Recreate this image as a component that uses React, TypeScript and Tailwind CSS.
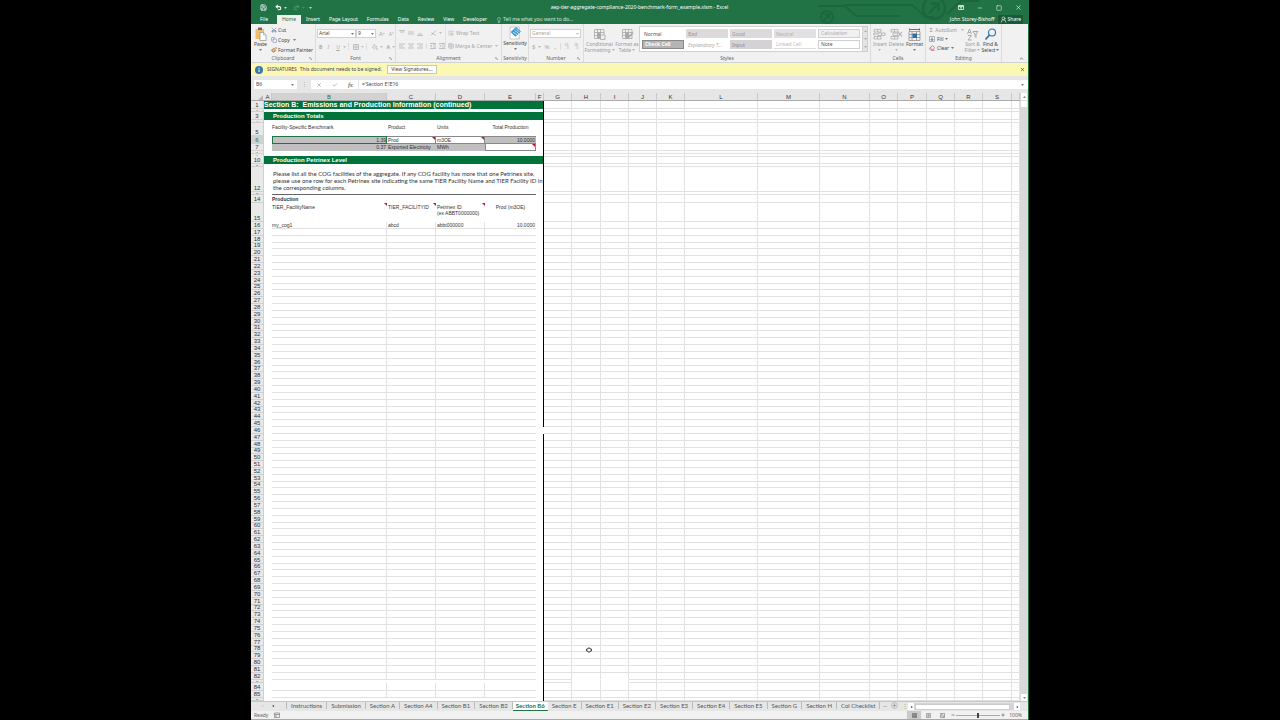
import React from "react";
import {
  Save, Undo2, Redo2, Lightbulb, Scissors, Copy, UserRound, Minus, Square, X, Check,
  ChevronUp, PaintBucket, Eraser, Plus, WrapText, TableCellsMerge, Paintbrush,
} from "lucide-react";

const COLS = ["A", "B", "C", "D", "E", "F", "G", "H", "I", "J", "K", "L", "M", "N", "O", "P", "Q", "R", "S", ""];
const RIGHT_COLS = COLS.slice(6);
const GRID =
  "grid grid-cols-[13px_8fr_115fr_49fr_49fr_51fr_8fr_28fr_29fr_28fr_28fr_28fr_73fr_62fr_50fr_28fr_29fr_28fr_28fr_29fr_8fr]";

const Caret = ({ className = "" }: { className?: string }) => (
  <svg viewBox="0 0 6 4" className={"h-[2px] w-[3px] shrink-0 fill-current opacity-70 " + className}>
    <path d="M0 0h6L3 4z" />
  </svg>
);

/* ---------- title bar ---------- */

function Circuit() {
  return (
    <svg viewBox="0 0 180 24" className="pointer-events-none absolute top-0 right-[48px] h-6 w-[180px]" fill="none" stroke="#1d653d" strokeWidth="1.8">
      <path d="M19 6h26l11 10h45M45 5h67l14 12h8M147 14l14-13h22M151 19h20" />
      <circle cx="134" cy="8" r="11" strokeWidth="2.4" />
      <path d="M129 13l9-9M131 3.5h7.500v7.500" strokeWidth="2.4" />
      <circle cx="27" cy="17" r="6" />
      <path d="M24 20l5-5M25 14.500h4.500v4.500" />
    </svg>
  );
}

function TitleBar() {
  return (
    <div className="relative flex h-[15px] items-center text-white">
      <div className="flex w-[110px] items-center gap-1 pl-[9px]">
        <button aria-label="Save"><Save className="size-[7px]" strokeWidth={2.5} /></button>
        <button aria-label="Undo" className="ml-1 flex items-center gap-[2px]"><Undo2 className="size-[7px]" strokeWidth={3.5} /><Caret /></button>
        <button aria-label="Redo" className="ml-[2px] flex items-center gap-[2px] text-[#5d9a79]"><Redo2 className="size-[7px]" strokeWidth={3} /><Caret /></button>
        <button aria-label="Customize"><Caret /></button>
      </div>
      <h1 className="flex-1 text-center text-[5px]">aep-tier-aggregate-compliance-2020-benchmark-form_example.xlsm - Excel</h1>
      <div className="flex w-[110px] items-center justify-end gap-[13px] pr-[6px]">
        <button aria-label="Ribbon display options">
          <svg viewBox="0 0 12 10" className="h-[5px] w-[6px]" fill="none" stroke="currentColor" strokeWidth="1.5"><path d="M1 1h10v8H1zM1 3h10M6 8V5M4.500 6L6 4.500 7.500 6" /></svg>
        </button>
        <button aria-label="Minimize"><Minus className="size-[6px]" /></button>
        <button aria-label="Maximize"><Square className="size-[6px]" /></button>
        <button aria-label="Close"><X className="size-[7px]" /></button>
      </div>
    </div>
  );
}

function MenuTabs() {
  const tabs = ["Insert", "Page Layout", "Formulas", "Data", "Review", "View", "Developer"];
  return (
    <nav className="relative flex h-[9px] items-stretch text-[5px] leading-[9px] text-white">
      <button className="w-[26px]">File</button>
      <button className="w-[24px] bg-[#f1f1f1] text-[#217346]">Home</button>
      <div className="flex items-center gap-[9px] pl-[5px]">
        {tabs.map((t) => <button key={t}>{t}</button>)}
      </div>
      <button className="ml-[9px] flex items-center gap-[1px] text-[#d5e6dc]"><Lightbulb className="size-[6px]" />Tell me what you want to do...</button>
      <div className="ml-auto flex items-center gap-[3px] pr-[5px]">
        <span>John Storey-Bishoff</span>
        <button className="flex h-[9px] items-center gap-[1px] bg-[#185a34] px-[2px]"><UserRound className="size-[7px]" />Share</button>
      </div>
    </nav>
  );
}

/* ---------- ribbon ---------- */

function Group({ name, className, launcher = false, children }: { name: string; className: string; launcher?: boolean; children: React.ReactNode }) {
  return (
    <section className={"relative flex shrink-0 flex-col border-r border-[#dcdcdc] " + className}>
      <div className="min-h-0 flex-1">{children}</div>
      <h2 className="h-[7px] text-center text-[5px] leading-[7px] text-[#666]">{name}</h2>
      {launcher && (
        <svg viewBox="0 0 8 8" className="absolute right-[3px] bottom-[2px] size-[3px]" fill="none" stroke="#888" strokeWidth="1.5"><path d="M1 5V1h4M3 3l4 4M7 4v3H4" /></svg>
      )}
    </section>
  );
}

const Lines = ({ d }: { d: string }) => (
  <svg viewBox="0 0 12 12" className="size-[6px] shrink-0" fill="none" stroke="#b4b4b4" strokeWidth="1.6"><path d={d} /></svg>
);

function RibbonSelect({ label, value, className }: { label: string; value: string; className: string }) {
  return (
    <div className={"relative shrink-0 " + className}>
      <select aria-label={label} className="h-[9px] w-full appearance-none border border-[#d0d0d0] bg-white pl-[1px] text-[5px] leading-[7px]"><option>{value}</option></select>
      <Caret className="pointer-events-none absolute top-[4px] right-[2px]" />
    </div>
  );
}

function TableIcon({ accent = "#a9a9a9", extra }: { accent?: string; extra: React.ReactNode }) {
  return (
    <svg viewBox="0 0 26 26" className="size-[13px]" fill="none" stroke="#a8a8a8" strokeWidth="1.6">
      <path d="M3 3h19v18H3zM3 9h19M3 15h19M9 3v18M15 3v18" />
      <path d="M9 9h6v12H9z" fill={accent} stroke="none" />
      {extra}
    </svg>
  );
}

function StyleCell({ name, className }: { name: string; className: string }) {
  return <button className={"h-[9px] pl-[2px] text-left whitespace-nowrap " + className}>{name}</button>;
}

function Ribbon() {
  return (
    <div className="flex h-[39px] border-b border-[#d2d2d2] bg-[#f1f1f1] text-[5px] leading-[6px] text-[#444]">
      <Group name="Clipboard" className="w-[65px]" launcher>
        <div className="flex">
          <button className="flex w-[19px] flex-col items-center pt-[3px]">
            <svg viewBox="0 0 24 28" className="h-[14px] w-[12px]">
              <path d="M1 4h17v20H1z" fill="#f0bd6b" /><path d="M6 1h8v5H6z" fill="#666" />
              <path d="M10 11h7l5 5v11H10z" fill="#fff" stroke="#8a8a8a" strokeWidth="1.300" /><path d="M17 11v5h5" fill="none" stroke="#8a8a8a" />
            </svg>
            Paste<Caret className="mt-[2px]" />
          </button>
          <div className="flex flex-col gap-[4px] pt-[3px] pl-[1px]">
            <button className="flex items-center gap-[1px]"><Scissors className="size-[6px] -rotate-90 text-[#41719c]" />Cut</button>
            <button className="flex items-center gap-[1px]"><Copy className="size-[6px] text-[#5b7fa6]" />Copy<Caret className="ml-[2px]" /></button>
            <button className="flex items-center gap-[1px] whitespace-nowrap"><Paintbrush className="size-[6px] text-[#b0702a]" strokeWidth={3} />Format Painter</button>
          </div>
        </div>
      </Group>
      <Group name="Font" className="w-[80px]" launcher>
        <div className="flex pt-[5px] pl-[1px]">
          <RibbonSelect label="Font" value="Arial" className="w-[39px]" />
          <RibbonSelect label="Font size" value="9" className="w-[20px]" />
          <div className="flex items-center gap-[4px] pl-[3px] text-[#aaa]"><button className="text-[6px]">A<sup className="text-[3px]">▴</sup></button><button>A<sup className="text-[3px]">▾</sup></button></div>
        </div>
        <div className="flex items-center pt-[5px] pl-[3px] text-[#aaa]">
          <button className="w-[9px] text-left font-bold">B</button><button className="w-[9px] text-left italic">I</button><button className="w-[7px] text-left underline">U</button><Caret />
          <span className="ml-[2px] h-[7px] border-l border-[#ddd]" />
          <span className="ml-[4px]"><Lines d="M1 1h10v10H1zM1 6h10M6 1v10" /></span><Caret className="ml-[2px]" />
          <span className="ml-[2px] h-[7px] border-l border-[#ddd]" />
          <PaintBucket className="ml-[5px] size-[6px]" /><Caret className="ml-[2px]" />
          <button className="ml-[4px] font-bold">A</button><Caret className="ml-[2px]" />
        </div>
      </Group>
      <Group name="Alignment" className="w-[106px]" launcher>
        <div className="flex pl-[3px]">
          <div className="grid grid-cols-[9px_9px_9px_4px_15px] items-center gap-y-[7px] pt-[6px]">
            <Lines d="M0 1h12M2 4h8" /><Lines d="M0 4h12M0 8h12" /><Lines d="M0 11h12M2 8h8" /><span />
            <div className="flex items-center gap-[2px] text-[#aaa]"><svg viewBox="0 0 12 12" className="h-[6px] w-[7px]" fill="none" stroke="#a8a8a8" strokeWidth="1.500"><path d="M1 11L11 1M2 5l4 4M8 9l3 1" /></svg><Caret /></div>
            <Lines d="M0 2h12M0 6h8M0 10h12" /><Lines d="M0 2h12M2 6h8M0 10h12" /><Lines d="M0 2h12M4 6h8M0 10h12" /><span className="h-[6px] border-l border-[#ddd]" />
            <div className="flex gap-[3px]"><Lines d="M0 1h12M6 4h6M6 8h6M0 11h12M4 4L1 6l3 2" /><Lines d="M0 1h12M6 4h6M6 8h6M0 11h12M1 4l3 2-3 2" /></div>
          </div>
          <div className="flex flex-col gap-[7px] border-l border-[#e2e2e2] pt-[6px] pl-[2px] whitespace-nowrap text-[#a6a6a6]">
            <button className="flex items-center gap-[2px]"><WrapText className="size-[6px]" />Wrap Text</button>
            <button className="flex items-center gap-[1px]"><TableCellsMerge className="size-[6px]" />Merge &amp; Center<Caret className="ml-[2px]" /></button>
          </div>
        </div>
      </Group>
      <Group name="Sensitivity" className="w-[27px]">
        <button className="flex w-full flex-col items-center pt-[2px]">
          <svg viewBox="0 0 26 26" className="size-[14px]">
            <path d="M4 2h17v22H4z" fill="#fff" stroke="#9aa7b3" /><path d="M5 11L15 2l9 8-10 10z" fill="#2f94c8" /><path d="M9 11l8 6M12 8l8 6M15 5l6 6" stroke="#fff" strokeWidth="1.500" />
          </svg>
          Sensitivity<Caret className="mt-[2px]" />
        </button>
      </Group>
      <Group name="Number" className="w-[55px]" launcher>
        <div className="pt-[5px] pl-[1px] text-[#a6a6a6]">
          <RibbonSelect label="Number format" value="General" className="w-[51px]" />
          <div className="flex items-center gap-[3px] pt-[5px] pl-[2px]">
            <button className="text-[6px]">$</button><Caret /><button className="text-[6px]">%</button><button className="ml-[2px] font-bold">,</button>
            <span className="ml-[1px] h-[7px] border-l border-[#ddd]" />
            <button className="text-[3px] leading-[3px]">.00<br />←0</button><button className="ml-[2px] text-[3px] leading-[3px]">.00<br />→0</button>
          </div>
        </div>
      </Group>
      <Group name="Styles" className="min-w-[287px] flex-1">
        <div className="flex">
          <button className="flex w-[31px] flex-col items-center pt-[4px] text-[#999]">
            <TableIcon extra={<path d="M15 14h9v9h-9z" fill="#eee" />} />Conditional<span className="flex items-center gap-[1px]">Formatting<Caret /></span>
          </button>
          <button className="flex w-[24px] flex-col items-center pt-[4px] whitespace-nowrap text-[#999]">
            <TableIcon extra={<path d="M14 20l10-11" strokeWidth="3" />} />Format as<span className="flex items-center gap-[1px]">Table<Caret /></span>
          </button>
          <div className="mt-[2px] grid h-[26px] flex-1 grid-cols-5 content-center gap-x-[2px] gap-y-[2px] border border-[#d0d0d0] bg-white px-[2px]">
            <StyleCell name="Normal" className="text-[#555]" />
            <StyleCell name="Bad" className="bg-[#dcdadb] text-[#999]" />
            <StyleCell name="Good" className="bg-[#dcdadb] text-[#999]" />
            <StyleCell name="Neutral" className="bg-[#e2e0e2] text-[#b4b4b4]" />
            <StyleCell name="Calculation" className="border border-[#d0d0d0] bg-[#f2f0f2] leading-[7px] text-[#aaa]" />
            <StyleCell name="Check Cell" className="border border-[#888] bg-[#b5b3b5] leading-[7px] font-bold text-white" />
            <StyleCell name="Explanatory T..." className="text-[#aaa] italic" />
            <StyleCell name="Input" className="bg-[#d4d2d4] text-[#888]" />
            <StyleCell name="Linked Cell" className="border-b border-[#ddd] text-[#bbb]" />
            <StyleCell name="Note" className="border border-[#d0d0d0] leading-[7px] text-[#555]" />
          </div>
          <div className="mt-[2px] mr-[2px] grid h-[26px] w-[5px] grid-rows-3 place-items-center border border-l-0 border-[#ccc] bg-[#e4e4e4] text-[#999]">
            <Caret className="rotate-180" /><Caret /><Caret />
          </div>
        </div>
      </Group>
      <Group name="Cells" className="w-[55px]">
        <div className="flex justify-between px-[2px] pt-[4px]">
          <button className="flex flex-col items-center text-[#999]">
            <svg viewBox="0 0 26 26" className="size-[13px]" fill="none" stroke="#aaa" strokeWidth="1.500"><path d="M2 3h14v5H2zM9 3v5M10 10h14v5H10zM17 10v5M2 17h14v5H2zM9 17v5M9 12H1M4 9l-3 3 3 3" /></svg>Insert<Caret className="mt-[2px]" />
          </button>
          <button className="flex flex-col items-center text-[#999]">
            <svg viewBox="0 0 26 26" className="size-[13px]" fill="none" stroke="#aaa" strokeWidth="1.500"><path d="M2 3h14v5H2zM9 3v5M6 10h9v5H6zM2 17h14v5H2zM9 17v5" /><path d="M16 8l8 9M24 8l-8 9" strokeWidth="2.200" /></svg>Delete<Caret className="mt-[2px]" />
          </button>
          <button className="flex flex-col items-center">
            <svg viewBox="0 0 26 26" className="size-[13px]" fill="none" stroke="#777" strokeWidth="1.200"><path d="M2 7h22v18H2zM2 13h22M2 19h22M8 7v18M17 7v18" /><path d="M9 11h9v9H9z" fill="#2d6fa8" stroke="none" /><path d="M3 3h20M3 1v4M23 1v4" stroke="#2d6fa8" strokeWidth="1.800" /></svg>Format<Caret className="mt-[2px]" />
          </button>
        </div>
      </Group>
      <Group name="Editing" className="w-[76px]">
        <div className="flex pt-[3px] pl-[3px]">
          <div className="flex w-[35px] flex-col gap-[3px] whitespace-nowrap">
            <button className="flex items-center gap-[2px] text-[#999]"><span className="w-[5px] text-[6px]">Σ</span>AutoSum<Caret className="ml-[2px]" /></button>
            <button className="flex items-center gap-[2px]">
              <svg viewBox="0 0 12 12" className="size-[6px]" fill="none" stroke="#777"><path d="M1 1h10v10H1z" /><path d="M6 3v6M3.500 6.500L6 9l2.500-2.500" stroke="#2d6fa8" strokeWidth="1.800" /></svg>Fill<Caret />
            </button>
            <button className="flex items-center gap-[2px]"><Eraser className="size-[6px] text-[#d0557a]" strokeWidth={3} />Clear<Caret /></button>
          </div>
          <button className="flex w-[17px] flex-col items-center pt-px whitespace-nowrap text-[#999]">
            <svg viewBox="0 0 26 26" className="size-[13px]" fill="none" stroke="#aaa" strokeWidth="2"><path d="M3 12L7 2l4 10M4.500 9h5M4 15h7l-7 9h7M14 7h10l-4 5v7l-2-2v-5z" /></svg>Sort &amp;<span className="flex items-center gap-[1px]">Filter<Caret /></span>
          </button>
          <button className="flex w-[19px] flex-col items-center pt-px whitespace-nowrap">
            <svg viewBox="0 0 26 26" className="size-[13px]" fill="none" stroke="#2d6fa8"><circle cx="16" cy="9" r="7" strokeWidth="2.200" /><path d="M11 14L3 23" strokeWidth="3.500" /></svg>Find &amp;<span className="flex items-center gap-[1px]">Select<Caret /></span>
          </button>
        </div>
      </Group>
      <button aria-label="Collapse the ribbon" className="flex w-[26px] shrink-0 items-end justify-end pr-[4px] pb-[1px]"><ChevronUp className="size-[5px]" strokeWidth={3} /></button>
    </div>
  );
}

function MessageBar() {
  return (
    <div className="flex h-[13px] items-center bg-[#fbf7b5] text-[5px] text-[#444]">
      <svg viewBox="0 0 16 16" className="ml-[4px] size-[8px]"><circle cx="8" cy="8" r="8" fill="#3a78a8" /><path d="M8 7v5M8 3.500v2" stroke="#fff" strokeWidth="2" /></svg>
      <span className="ml-[4px]">SIGNATURES</span>
      <span className="ml-[3px]">This document needs to be signed.</span>
      <button className="ml-[5px] h-[9px] w-[50px] border border-[#c9c9b0] bg-[#fdfdfd] leading-[7px]">View Signatures...</button>
      <button aria-label="Close message" className="mr-[3px] ml-auto"><X className="size-[5px]" strokeWidth={3} /></button>
    </div>
  );
}

function FormulaBar() {
  return (
    <div className="flex h-[17px] items-center bg-[#e6e6e6] text-[5px] text-[#444]">
      <div className="ml-[3px] flex h-[9px] w-[43px] items-center bg-white pr-[3px]">
        <input aria-label="Name box" defaultValue="B6" className="min-w-0 flex-1 pl-[2px]" /><Caret />
      </div>
      <span className="w-[14px] text-center text-[#999]">⋮</span>
      <div className="flex h-[9px] w-[47px] items-center justify-around bg-white text-[#aaa]">
        <button aria-label="Cancel"><X className="size-[6px]" strokeWidth={3} /></button>
        <button aria-label="Enter"><Check className="size-[6px]" strokeWidth={3} /></button>
        <button aria-label="Insert function" className="font-['Liberation_Serif',serif] text-[7px] leading-[8px] text-[#444] italic">fx</button>
      </div>
      <div className="ml-[1px] flex h-[9px] flex-1 items-center bg-white pr-[4px]">
        <input aria-label="Formula" defaultValue="='Section E'!E16" className="min-w-0 flex-1 pl-[3px]" /><Caret />
      </div>
    </div>
  );
}

/* ---------- worksheet ---------- */

const RowNo = ({ n, active = false, tiny = false }: { n: number; active?: boolean; tiny?: boolean }) => (
  <th scope="row" className={"flex items-end justify-center border-r border-b border-[#cfcfcf] font-normal " + (tiny ? "text-[2px] leading-[2px] " : "text-[6px] leading-[5px] ") + (active ? "bg-[#cdd3cf] text-[#217346]" : "bg-[#e9e9e9] text-[#333]")}>{n}</th>
);

function RightCells({ skip = [] as string[] }) {
  return (
    <>
      {RIGHT_COLS.map((c, i) => (
        <td key={i} className={"border-r border-b " + (skip.includes(c) ? "border-r-[#e1e1e1] border-b-transparent" : "border-[#e1e1e1]")} />
      ))}
    </>
  );
}

function Row({ n, h, active, tiny, children }: { n: number; h: string; active?: boolean; tiny?: boolean; children: React.ReactNode }) {
  return (
    <tr className={GRID + " " + h}>
      <RowNo n={n} active={active} tiny={tiny} />
      {children}
      <RightCells skip={n === 83 ? ["H", "I"] : []} />
    </tr>
  );
}

const Blank = ({ n, h }: { n: number; h: string }) => (
  <Row n={n} h={h} tiny><td colSpan={6} className="col-span-6 border-r border-black" /></Row>
);

const Band = ({ n, children }: { n: number; children: React.ReactNode }) => (
  <Row n={n} h="h-[8px]"><td colSpan={6} className="col-span-6 flex items-center border-r border-black bg-[#00733a] pl-[9px] text-[6px] font-bold text-white">{children}</td></Row>
);

const Edge = () => <td className="border-r border-black" />;
const Note = () => (
  <svg viewBox="0 0 4 4" className="absolute top-0 right-0 size-[3px] fill-[#c8102e]"><path d="M0 0h4v4z" /></svg>
);

function PlainRow({ n, h = "flex-1" }: { n: number; h?: string }) {
  const gap = n === 46;
  return (
    <tr className={GRID + " min-h-[6px] " + h}>
      <RowNo n={n} />
      <td />
      <td className="border-r border-b border-[#e1e1e1]" />
      <td className="border-r border-b border-[#e1e1e1]" />
      <td className="border-r border-b border-[#e1e1e1]" />
      <td className="border-b border-[#e1e1e1]" />
      <td className={gap ? "border-r border-transparent" : "border-r border-black"} />
      <RightCells skip={n === 82 ? ["H", "I"] : []} />
    </tr>
  );
}

function Sheet() {
  const body = Array.from({ length: 66 }, (_, i) => 17 + i);
  return (
    <div className="relative flex min-h-0 flex-1">
      <table className="flex min-w-0 flex-1 flex-col bg-white font-['Liberation_Sans',Arial,sans-serif] text-[5px] leading-[6px] text-[#333]">
        <thead>
          <tr className={GRID + " h-[8px] border-b border-[#ababab] bg-[#e6e6e6] text-[6px] leading-[8px]"}>
            <th className="flex items-end justify-end pr-[1px]"><svg viewBox="0 0 6 6" className="size-[5px] fill-[#b7b7b7]"><path d="M6 0v6H0z" /></svg></th>
            {COLS.map((c, i) => (
              <th key={i} scope="col" className={"h-[7px] border-r border-[#c8c8c8] text-center font-normal " + (c === "B" ? "bg-[#d2d2d2] text-[#217346]" : "")}>{c}</th>
            ))}
          </tr>
        </thead>
        <tbody className="flex flex-1 flex-col">
          <Row n={1} h="h-[8px]"><td colSpan={6} className="col-span-6 flex items-center border-r border-black bg-[#00733a] text-[7px] font-bold whitespace-pre text-white">{"Section B:  Emissions and Production Information (continued)"}</td></Row>
          <Blank n={2} h="h-[3px]" />
          <Band n={3}>Production Totals</Band>
          <Blank n={4} h="h-[3px]" />
          <Row n={5} h="h-[13px]">
            <td /><td className="pt-px">Facility-Specific Benchmark</td><td className="pt-px pl-[1px]">Product</td><td className="pt-px pl-[1px]">Units</td><td className="pt-px text-center whitespace-nowrap">Total Production</td><Edge />
          </Row>
          <Row n={6} h="h-[8px]" active>
            <td />
            <td className="border border-[#217346] bg-[#c0c0c0] text-right">1.39</td>
            <td className="relative border border-l-0 border-[#888] bg-white pl-[1px]">Prod<Note /></td>
            <td className="relative border border-l-0 border-[#888] bg-white pl-[1px]">m3OE<Note /></td>
            <td className="border-y border-[#888] bg-[#c0c0c0] pr-[1px] text-right">10.0000</td>
            <Edge />
          </Row>
          <Row n={7} h="h-[7px]">
            <td />
            <td className="bg-[#c0c0c0] pr-[1px] text-right">0.37</td>
            <td className="bg-[#c0c0c0] pl-[1px] whitespace-nowrap">Exported Electricity</td>
            <td className="bg-[#c0c0c0] pl-[1px]">MWh</td>
            <td className="relative border border-t-0 border-[#888] bg-white"><Note /></td>
            <Edge />
          </Row>
          <Blank n={8} h="h-[3px]" />
          <Blank n={9} h="h-[2px]" />
          <Band n={10}>Production Petrinex Level</Band>
          <Blank n={11} h="h-[3px]" />
          <Row n={12} h="h-[25px]">
            <td />
            <td colSpan={4} className="col-span-4 pt-[3px] pl-[1px] font-['Lato','Liberation_Sans',sans-serif] text-[6px] leading-[7px] whitespace-nowrap">
              Please list all the COG facilities of the aggregate. If any COG facility has more that one Petrinex site,<br />
              please use one row for each Petrinex site indicating the same TIER Facility Name and TIER Facility ID in<br />
              the corresponding columns.
            </td>
            <Edge />
          </Row>
          <Row n={13} h="h-[3px]" tiny><td /><td colSpan={4} className="col-span-4 border-b border-[#666]" /><Edge /></Row>
          <Row n={14} h="h-[8px]"><td /><td colSpan={4} className="col-span-4 pt-px font-bold">Production</td><Edge /></Row>
          <Row n={15} h="h-[19px]">
            <td />
            <td className="relative pt-px">TIER_FacilityName<Note /></td>
            <td className="relative pt-px pl-[1px]">TIER_FACILITYID<Note /></td>
            <td className="relative pt-px pl-[1px] whitespace-nowrap">Petrinex ID<br />(ex ABBT0000000)<Note /></td>
            <td className="pt-px text-center whitespace-nowrap">Prod (m3OE)</td>
            <Edge />
          </Row>
          <Row n={16} h="h-[7px]">
            <td />
            <td className="border-r border-b border-[#e1e1e1]">my_cog1</td>
            <td className="border-r border-b border-[#e1e1e1] pl-[1px]">abcd</td>
            <td className="border-r border-b border-[#e1e1e1] pl-[1px]">abbt000000</td>
            <td className="border-b border-[#e1e1e1] pr-[1px] text-right">10.0000</td>
            <Edge />
          </Row>
          {body.map((n) => <PlainRow key={n} n={n} />)}
          <Blank n={83} h="h-[3px]" />
          <PlainRow n={84} h="h-[8px]" />
          <PlainRow n={85} h="h-[7px]" />
          <Blank n={86} h="h-[3px]" />
        </tbody>
      </table>
      <div className="flex w-[8px] shrink-0 flex-col items-center bg-[#d9d9d9] text-[#555]">
        <button aria-label="Scroll up" className="flex h-[7px] w-[6px] items-center justify-center bg-white"><Caret className="rotate-180" /></button>
        <div className="mt-[1px] h-[6px] w-[6px] bg-white" />
        <button aria-label="Scroll down" className="mt-auto flex h-[7px] w-[6px] items-center justify-center bg-white"><Caret /></button>
      </div>
      <svg viewBox="0 0 12 12" className="pointer-events-none absolute bottom-[48px] left-[335px] size-[6px]" fill="#fff" stroke="#222" strokeWidth="1.500"><path d="M4 2h4v2h3v4H8v2H4V8H1V4h3z" /></svg>
    </div>
  );
}

/* ---------- bottom bars ---------- */

function SheetTabs() {
  const tabs = ["Instructions", "Submission", "Section A", "Section A4", "Section B1", "Section B2", "Section B6", "Section E", "Section E1", "Section E2", "Section E3", "Section E4", "Section E5", "Section G", "Section H", "Col Checklist"];
  return (
    <div className="flex h-[10px] items-start border-t border-[#c6c6c6] bg-[#e6e6e6] font-['Lato','Noto_Sans',sans-serif] text-[6px] leading-[7px] text-[#555]">
      <div className="flex h-[7px] w-[36px] shrink-0 items-center gap-[8px] border-r border-[#bbb] pl-[10px]"><Caret className="rotate-90 text-[#bbb]" /><Caret className="-rotate-90 text-black" /></div>
      {tabs.map((t) =>
        t === "Section B6" ? (
          <button key={t} className="h-[9px] shrink-0 border-b border-[#217346] bg-white px-[3px] pb-px font-bold whitespace-nowrap text-[#217346]">{t}</button>
        ) : (
          <button key={t} className="h-[7px] shrink-0 border-r border-[#bbb] px-[4px] whitespace-nowrap">{t}</button>
        )
      )}
      <span className="ml-[3px] text-[5px]">...</span>
      <button aria-label="New sheet" className="ml-[4px] flex size-[7px] shrink-0 items-center justify-center rounded-full border border-[#bbb]"><Plus className="size-[5px]" /></button>
      <span className="ml-[4px] text-[#999]">⋮</span>
      <div className="mt-px ml-auto flex h-[7px] w-[112px] shrink-0 items-center bg-[#d4d4d4] text-black">
        <button aria-label="Scroll left" className="flex h-full w-[6px] items-center justify-center bg-white"><Caret className="rotate-90" /></button>
        <div className="ml-[1px] h-[6px] w-[95px] border border-[#ccc] bg-white" />
        <button aria-label="Scroll right" className="ml-auto flex h-full w-[6px] items-center justify-center bg-white"><Caret className="-rotate-90" /></button>
      </div>
      <div className="w-[8px] shrink-0" />
    </div>
  );
}

function StatusBar() {
  return (
    <footer className="flex h-[9px] items-center border-b border-[#a9a9a9] bg-[#f1f1f1] text-[5px] leading-[7px] text-[#666]">
      <span className="ml-[3px]">Ready</span>
      <svg viewBox="0 0 12 12" className="ml-[6px] size-[6px]" fill="none" stroke="#777" strokeWidth="1.300"><path d="M1 2h10v9H1zM1 5h10M4 5v6" /></svg>
      <div className="ml-auto flex h-full items-center">
        <button aria-label="Normal view" className="flex h-full w-[14px] items-center justify-center bg-[#c9c9c9]"><svg viewBox="0 0 12 12" className="size-[5px]" fill="none" stroke="#666" strokeWidth="1.500"><path d="M1 1h10v10H1zM1 4.500h10M1 8h10M4.500 1v10M8 1v10" /></svg></button>
        <button aria-label="Page layout view" className="flex w-[14px] justify-center"><svg viewBox="0 0 12 12" className="size-[5px]" fill="none" stroke="#777" strokeWidth="1.500"><path d="M1 1h10v10H1zM3.500 4h5M3.500 6h5M3.500 8h5" /></svg></button>
        <button aria-label="Page break view" className="flex w-[14px] justify-center"><svg viewBox="0 0 12 12" className="size-[5px]" fill="none" stroke="#777" strokeWidth="1.500"><path d="M1 1h10v10H1zM1 7h4V1M8 11V7h3" /></svg></button>
        <button aria-label="Zoom out" className="ml-[2px]"><Minus className="size-[4px]" strokeWidth={4} /></button>
        <input aria-label="Zoom" type="range" defaultValue={50} className="mx-[1px] h-[6px] w-[44px] appearance-none bg-transparent [&::-webkit-slider-runnable-track]:h-px [&::-webkit-slider-runnable-track]:bg-[#aaa] [&::-webkit-slider-thumb]:-mt-[2px] [&::-webkit-slider-thumb]:h-[5px] [&::-webkit-slider-thumb]:w-[2px] [&::-webkit-slider-thumb]:appearance-none [&::-webkit-slider-thumb]:bg-[#444]" />
        <button aria-label="Zoom in"><Plus className="size-[4px]" strokeWidth={4} /></button>
        <span className="mr-[6px] ml-[4px]">100%</span>
      </div>
    </footer>
  );
}

export default function App() {
  return (
    <div className="flex min-h-screen bg-black px-[251px]">
      <main className="flex min-w-0 flex-1 flex-col overflow-hidden border-r border-[#217346] bg-[#e6e6e6] font-['Noto_Sans','Open_Sans',sans-serif]">
        <header className="relative bg-[#217346]">
          <Circuit />
          <TitleBar />
          <MenuTabs />
        </header>
        <Ribbon />
        <MessageBar />
        <FormulaBar />
        <Sheet />
        <SheetTabs />
        <StatusBar />
      </main>
    </div>
  );
}
